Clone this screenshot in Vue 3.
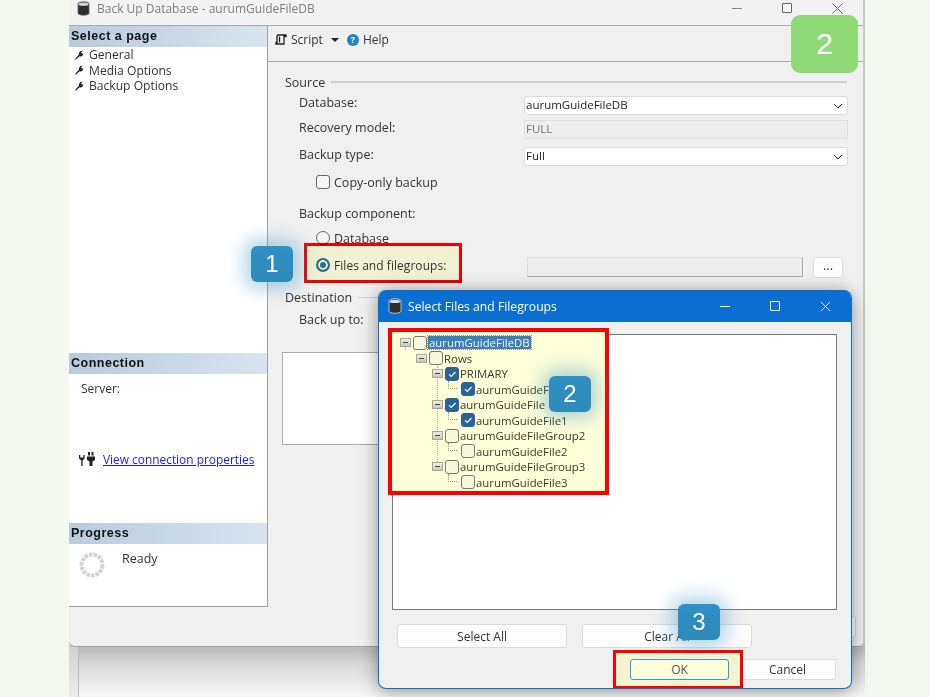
<template>
  <div class="page">
    <div class="backwin">
      <div class="backinner"></div>
    </div>

    <section class="main">
      <header class="titlebar">
        <svg class="dbicon" viewBox="0 0 14 16"><path d="M1 3c0-3 12-3 12 0v10c0 3-12 3-12 0z" fill="#2e2e2e" stroke="#888" stroke-width=".8"/><ellipse cx="7" cy="3.4" rx="5.4" ry="1.7" fill="#d8d8d8"/></svg>
        <span class="titletext">Back Up Database - aurumGuideFileDB</span>
        <div class="winctl">
          <i class="min"></i><i class="max"></i>
          <svg class="close" viewBox="0 0 12 12"><path d="M.5.5l11 11M11.500.5l-11 11" stroke="#555" fill="none"/></svg>
        </div>
      </header>
      <div class="mainbody">
        <aside class="side">
          <div class="sideblock pages">
            <h3>Select a page</h3>
            <ul>
              <li v-for="p in pages" :key="p">
                <svg viewBox="0 0 12 12" class="wrench"><path d="M1 11l5-5.500C5.500 3 7.500.500 10.500 1L8.500 3l1 1.500L11 3.500c.5 2.500-2 5-4.500 4L2.500 11.500z" fill="#222"/></svg>{{ p }}
              </li>
            </ul>
          </div>
          <div class="sideblock conn">
            <h3>Connection</h3>
            <div class="server">Server:</div>
            <div class="connlink">
              <svg viewBox="0 0 16 14" class="plug"><path d="M0 3h1.300v2.500h3V3h1.300v3.500L3.600 8.500V14H2.300V8.500L0 6.500zM9 0h2v3.500H9zM12.500 0h2v3.500h-2zM8 4.500h8v3.500l-2.500 1.500V14h-3V9.500L8 8z" fill="#222"/></svg>
              <a>View connection properties</a>
            </div>
          </div>
          <div class="sideblock prog">
            <h3>Progress</h3>
            <div class="progrow">
              <svg viewBox="0 0 26 26" class="spin"><circle cx="13" cy="13" r="10.500" fill="none" stroke="#d4d4d4" stroke-width="4" stroke-dasharray="3.600 1"/></svg>
              <span class="ready">Ready</span>
            </div>
          </div>
        </aside>
        <div class="content">
          <div class="toolbar">
            <svg viewBox="0 0 12 12" class="scripticon"><path d="M3 1h8v1.500H9V10H1v-1.500h1V2zM4.500 2.500V8.500" fill="none" stroke="#222" stroke-width="1.300"/></svg>
            <span>Script</span>
            <i class="caret"></i>
            <span class="helpdot">?</span>
            <span>Help</span>
          </div>
          <div class="form">
            <div class="legend first"><span>Source</span><i></i></div>
            <div class="row r1"><label>Database:</label><div class="combo">aurumGuideFileDB<svg viewBox="0 0 10 6"><path d="M1 1l4 4 4-4" fill="none" stroke="#222"/></svg></div></div>
            <div class="row r2"><label>Recovery model:</label><div class="combo dis">FULL</div></div>
            <div class="row r3"><label>Backup type:</label><div class="combo">Full<svg viewBox="0 0 10 6"><path d="M1 1l4 4 4-4" fill="none" stroke="#222"/></svg></div></div>
            <div class="check"><i class="cb"></i>Copy-only backup</div>
            <div class="comp">Backup component:</div>
            <div class="radio"><i class="rb"></i>Database</div>
            <div class="radio fg">
              <span class="fglabel"><i class="rb on"></i>Files and filegroups:</span>
              <span class="fgfield"></span>
              <span class="dots">...</span>
            </div>
            <div class="legend dest"><span>Destination</span><i></i></div>
            <div class="backup">Back up to:</div>
            <div class="listbox"></div>
          </div>
        </div>
      </div>
      <div class="peek"></div>
    </section>

    <div class="hl hl1"></div>

    <section class="dialog">
      <header class="dtitle">
        <svg class="ddb" viewBox="0 0 14 16"><path d="M1 3c0-3 12-3 12 0v10c0 3-12 3-12 0z" fill="#2e2e2e" stroke="#ddd" stroke-width=".8"/><ellipse cx="7" cy="3.400" rx="5.400" ry="1.700" fill="#d8d8d8"/></svg>
        <span>Select Files and Filegroups</span>
        <div class="dctl">
          <i class="dmin"></i><i class="dmax"></i>
          <svg class="dclose" viewBox="0 0 12 12"><path d="M1 1l10 10M11 1L1 11" stroke="#fff" fill="none"/></svg>
        </div>
      </header>
      <div class="dbody">
        <div class="tree">
          <div class="hltree">
            <i class="vline"></i>
            <i class="vline2"></i>
            <div v-for="(n, i) in nodes" :key="i" class="node" :class="'lvl' + n.l">
              <i v-if="n.l < 3" class="exp"></i>
              <i v-else class="elbow"></i>
              <i class="box" :class="{ on: n.c }">
                <svg v-if="n.c" viewBox="0 0 12 12"><path d="M3 6.200l2.200 2.200L9.500 4" fill="none" stroke="#fff" stroke-width="1.100"/></svg>
              </i>
              <span :class="{ sel: i === 0 }">{{ n.t }}</span>
            </div>
          </div>
        </div>
        <div class="dbtns">
          <button>Select All</button>
          <button>Clear All</button>
        </div>
        <div class="dbtns2">
          <div class="okwrap"><button class="ok">OK</button></div>
          <button class="cancel">Cancel</button>
        </div>
      </div>
    </section>

    <div class="badge b1">1</div>
    <div class="badge b2">2</div>
    <div class="badge b3">3</div>
    <div class="green">2</div>
  </div>
</template>

<script setup>
const pages = ['General', 'Media Options', 'Backup Options']
const nodes = [
  { t: 'aurumGuideFileDB', l: 0, c: false },
  { t: 'Rows', l: 1, c: false },
  { t: 'PRIMARY', l: 2, c: true },
  { t: 'aurumGuideF', l: 3, c: true },
  { t: 'aurumGuideFile', l: 2, c: true },
  { t: 'aurumGuideFile1', l: 3, c: true },
  { t: 'aurumGuideFileGroup2', l: 2, c: false },
  { t: 'aurumGuideFile2', l: 3, c: false },
  { t: 'aurumGuideFileGroup3', l: 2, c: false },
  { t: 'aurumGuideFile3', l: 3, c: false }
]
</script>

<style>
html, body { margin: 0; background: #f3f9ee; }
</style>

<style scoped>
.page { position: relative; width: 930px; height: 697px; overflow: hidden; background: #f3f9ee; font: 12.500px "Open Sans", "Liberation Sans", sans-serif; color: #333; }
.page * { box-sizing: border-box; }
i { display: block; font-style: normal; }

.backwin { position: absolute; left: 69px; top: 640px; width: 796px; height: 57px; background: linear-gradient(#cfcfcf, #ececec); padding-left: 9px; }
.backinner { height: 100%; background: linear-gradient(#bdbdbd 10px, #d8d8d8 24px, #f8f8f8); border-left: 1px solid #bbb; }

.main { position: absolute; left: 69px; top: 0; width: 796px; height: 647px; background: #f0f0f0; border-right: 2px solid #c8c8c8; border-bottom: 1px solid #a0a0a0; border-radius: 0 0 6px 6px; display: flex; flex-direction: column; }
.titlebar { height: 26px; flex: none; display: flex; align-items: center; padding-left: 7px; padding-bottom: 9px; border-bottom: 1px solid #a8a8a8; background: #f3f3f3; color: #7d7d7d; }
.dbicon { width: 15px; height: 15px; margin-right: 6px; }
.titletext { font-size: 12px; }
.winctl { margin-left: auto; display: flex; align-items: center; gap: 40px; padding-right: 20px; }
.min { width: 10px; border-top: 1px solid #888; }
.max { width: 10px; height: 10px; border: 1px solid #666; border-radius: 1px; }
.close { width: 11px; height: 11px; }

.mainbody { flex: 1; display: flex; min-height: 0; }
.side { width: 199px; height: 581px; flex: none; background: #fff; border-right: 1px solid #a0a0a0; border-bottom: 1px solid #a0a0a0; display: flex; flex-direction: column; }
.sideblock h3 { margin: 0; height: 21px; line-height: 21px; padding-left: 2px; font-size: 12.500px; font-weight: 700; color: #111; background: linear-gradient(90deg, #b9cbdc, #d8e4f0); font-family: "Liberation Sans", sans-serif; letter-spacing: .5px; }
.pages { height: 327px; }
.pages ul { list-style: none; margin: 0; padding: 0; }
.pages li { height: 15.500px; line-height: 15px; padding-left: 5px; display: flex; align-items: center; gap: 5px; color: #333; font-size: 12.100px; }
.wrench { width: 10px; height: 10px; flex: none; }
.conn { height: 170px; }
.server { padding: 6px 0 0 12px; height: 77px; font-size: 12px; }
.connlink { padding-left: 10px; display: flex; align-items: center; gap: 8px; }
.plug { width: 16px; height: 14px; }
.connlink a { color: #1a1aee; text-decoration: underline; font-size: 11.900px; }
.prog h3 { height: 21px; }
.progrow { display: flex; padding: 8px 0 0 10px; gap: 17px; }
.ready { margin-top: -2px; }
.spin { width: 26px; height: 26px; }

.content { flex: 1; min-width: 0; display: flex; flex-direction: column; }
.toolbar { height: 36px; flex: none; padding: 0 0 8px 7px; border-bottom: 1px solid #a8a8a8; display: flex; align-items: center; font-size: 12px; }
.scripticon { width: 12px; height: 12px; margin-right: 4px; }
.caret { margin: 0 8px 0 8px; border: 4.500px solid transparent; border-top: 4.500px solid #222; border-bottom: 0; width: 0; }
.helpdot { width: 12px; height: 12px; border-radius: 50%; background: #1c83c9; color: #fff; font-size: 9px; font-weight: 700; line-height: 12px; text-align: center; margin-right: 4px; }

.form { padding: 0 16px 0 17px; position: relative; }
.legend { display: flex; align-items: center; gap: 6px; height: 18px; }
.legend i { flex: 1; border-top: 2px solid #cfcfcf; }
.dest i { border-top-width: 1px; }
.legend.first { margin-top: 11px; }
.row { display: flex; align-items: center; padding-left: 14px; }
.row label { flex: none; width: 225px; }
.r1 { margin-top: 3px; height: 22px; }
.r1 label { position: relative; top: -3px; }
.r2 label { position: relative; top: -2px; }
.r3 label { position: relative; top: -2px; }
.r2 { margin-top: 2px; height: 22px; }
.r3 { margin-top: 6px; height: 21px; }
.combo { flex: none; width: 324px; height: 19px; background: #fff; border: 1px solid #dcdcdc; border-radius: 3px; padding: 0 1px; line-height: 15px; color: #222; position: relative; font-size: 11.500px; }
.combo svg { position: absolute; right: 4px; top: 6px; width: 10px; height: 6px; }
.combo.dis { background: #ededed; color: #777; border-color: #dedede; border-radius: 0; }
.check { display: flex; align-items: center; gap: 4px; padding-left: 31px; height: 16px; margin-top: 7px; }
.cb { width: 14px; height: 14px; border: 1px solid #666; border-radius: 3px; background: #f5f5f5; }
.comp { padding-left: 14px; margin-top: 15px; height: 17px; }
.radio { display: flex; align-items: center; padding-left: 31px; height: 16px; gap: 4px; margin-top: 8px; }
.rb { width: 14px; height: 14px; border: 1px solid #666; border-radius: 50%; background: #f5f5f5; flex: none; }
.rb.on { border: 2.500px solid #2a6ea6; background: #2a6ea6; box-shadow: inset 0 0 0 2px #f5f5dc; }
.fg { margin-top: 10px; height: 22px; }
.fglabel { display: flex; align-items: center; gap: 4px; width: 207px; position: relative; top: -2px; font-size: 12px; letter-spacing: .05px; }
.fgfield { width: 276px; height: 20px; margin-left: 0; background: #ececec; border: 1px solid #ddd; border-right-color: #aaa; border-bottom-color: #aaa; }
.dots { width: 30px; height: 21px; margin-left: 6px; background: #fdfdfd; border: 1px solid #dcdcdc; border-radius: 3px; text-align: center; line-height: 16px; }
.dest { margin-top: 10px; }
.backup { padding-left: 14px; margin-top: 5px; }
.listbox { margin: 24px 0 0 -3px; width: 300px; height: 93px; background: #fff; border: 1px solid #aaa; }
.peek { position: absolute; left: 691px; top: 616px; width: 96px; height: 22px; background: #fdfdfd; border: 1px solid #d4d4d4; border-radius: 3px; }

.hl { position: absolute; pointer-events: none; }
.hl1 { left: 304px; top: 243px; width: 158px; height: 40px; border: 3px solid #f00; background: rgba(255,255,200,.55); mix-blend-mode: multiply; }

.dialog { position: absolute; left: 378px; top: 290px; width: 474px; height: 399px; background: #f0f0f0; border: 1px solid #0a6fd0; border-top: 0; border-radius: 8px; box-shadow: 0 2px 18px rgba(0,0,0,.4); overflow: hidden; display: flex; flex-direction: column; }
.dtitle { height: 32px; flex: none; background: #0a6fd0; color: #fff; display: flex; align-items: center; padding-left: 9px; font-size: 12.200px; }
.ddb { width: 14px; height: 16px; margin-right: 6px; }
.dctl { margin-left: auto; display: flex; align-items: center; gap: 40px; padding-right: 20px; }
.dmin { width: 10px; border-top: 1px solid #fff; }
.dmax { width: 10px; height: 10px; border: 1px solid #fff; border-radius: 1px; }
.dclose { width: 11px; height: 11px; }
.dbody { padding: 12px 15px 0 13px; flex: 1; }
.tree { height: 276px; width: 445px; background: #fff; border: 1px solid #7a7a7a; position: relative; }
.hltree { position: absolute; left: -5px; top: -7px; width: 221px; height: 167px; background: #ffffd8; border: 4px solid #f00; padding: 3px 0 0 8px; }
.vline { position: absolute; left: 45px; top: 34px; height: 102px; border-left: 1px dotted #aaa; }
.vline2 { position: absolute; left: 13px; top: 10px; height: 8px; border-left: 1px dotted #aaa; }
.node { height: 15.500px; display: flex; align-items: center; font-size: 11.400px; color: #3a3a2a; position: relative; white-space: nowrap; }
.lvl1 { padding-left: 16px; }
.lvl2 { padding-left: 32px; }
.lvl3 { padding-left: 48px; }
.exp { width: 11px; height: 9px; margin-right: 2px; border: 1px solid #a8a898; background: linear-gradient(#eeeed8, #c8c8b8); position: relative; flex: none; }
.exp::after { content: ""; position: absolute; left: 2px; right: 2px; top: 3px; border-top: 1px solid #347; }
.elbow { width: 9px; height: 8px; margin: -8px 4px 0 0; flex: none; border-left: 1px dotted #999; border-bottom: 1px dotted #999; }
.box { width: 14px; height: 14px; margin-right: 1px; border: 1px solid #777; border-radius: 3px; background: #f8f8dc; flex: none; }
.box.on { background: #2a6496; border-color: #2a6496; }
.box svg { width: 12px; height: 12px; display: block; }
.sel { background: #3a7fb8; color: #f4f4f4; outline: 1px dotted #b88; padding: 0 1px; line-height: 13px; }
.dbtns { margin: 14px 0 0 5px; display: flex; gap: 15px; }
.dbtns button, .cancel { font: inherit; font-size: 12px; color: #333; width: 170px; height: 24px; background: #fdfdfd; border: 1px solid #dcdcdc; border-radius: 3px; padding: 0; }
.dbtns2 { display: flex; justify-content: flex-end; margin-top: 2px; align-items: center; }
.okwrap { width: 130px; height: 39px; margin-right: -6px; border: 3px solid #f00; background: #f3f3d4; display: flex; align-items: center; padding-left: 14px; position: relative; z-index: 1; }
.ok { font: inherit; font-size: 12px; color: #555; width: 99px; height: 21px; background: #ffffdc; border: 1px solid #2a9fd0; border-radius: 3px; padding: 0; }
.dbtns2 .cancel { width: 99px; height: 21px; padding-left: 2px; }

.badge { position: absolute; width: 42px; height: 36px; background: linear-gradient(#2e90c6, #2f8ab8); border-radius: 6px; color: #fff; font-size: 24px; line-height: 36px; text-align: center; box-shadow: 0 0 18px 7px rgba(60,150,200,.4); font-family: "Liberation Sans", sans-serif; }
.b1 { left: 251px; top: 246px; }
.b2 { left: 549px; top: 376px; }
.b3 { left: 678px; top: 604px; }
.green { position: absolute; left: 791px; top: 15px; width: 67px; height: 58px; background: #8fd976; border-radius: 9px; color: #fff; font-size: 30px; line-height: 58px; text-align: center; font-family: "Liberation Sans", sans-serif; }
</style>
